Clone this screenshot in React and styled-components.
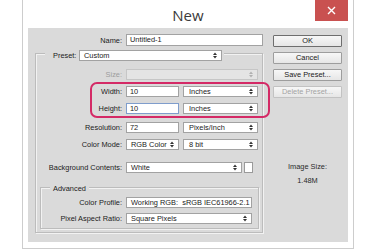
import React from "react";
import styled, { createGlobalStyle } from "styled-components";

const Global = createGlobalStyle`
  html, body { margin: 0; padding: 0; background: #fff; }
  body {
    font-family: "Liberation Sans", Arial, sans-serif;
    font-size: 7.4px;
    color: #1a1a1a;
  }
  #root { width: 375px; height: 249px; overflow: hidden; }
`;

const GRAY = "#dadada";

const Dialog = styled.div`
  box-sizing: border-box;
  margin-left: 22px;
  width: 332px;
  height: 249px;
  border: 1px solid #cdcdcd;
  border-top: none;
  background: #fff;
  display: flex;
  flex-direction: column;
  padding: 0 5px 6px;
`;

const TitleBar = styled.div`
  height: 28px;
  flex: none;
  display: grid;
  grid-template-columns: 1fr auto 1fr;
  align-items: start;
`;

const Title = styled.div`
  grid-column: 2;
  font-family: "Open Sans", "Noto Sans", sans-serif;
  font-size: 15px;
  line-height: 30px;
  color: #3a3a3a;
`;

const Close = styled.div`
  grid-column: 3;
  justify-self: end;
  width: 33px;
  height: 21px;
  background: #c95150;
  display: flex;
  align-items: center;
  justify-content: center;
`;

const Body = styled.div`
  flex: 1;
  background: ${GRAY};
  display: flex;
`;

const LeftCol = styled.div`
  width: 240px;
  display: flex;
  flex-direction: column;
  padding-top: 6px;
`;

const RightCol = styled.div`
  margin-left: 5px;
  width: 69px;
  padding-top: 7px;
  display: flex;
  flex-direction: column;
  gap: 5px;
`;

const Row = styled.div`
  display: flex;
  align-items: center;
  gap: 4px;
  height: ${(p) => p.$h || 11}px;
  margin-top: ${(p) => p.$mt || 0}px;
`;

const Label = styled.div`
  width: ${(p) => p.$w}px;
  flex: none;
  text-align: right;
  white-space: nowrap;
  color: ${(p) => (p.$disabled ? "#9c9c9c" : "#1a1a1a")};
`;

const Box = styled.div`
  box-sizing: border-box;
  flex: none;
  width: ${(p) => p.$w}px;
  height: ${(p) => p.$h || 11}px;
  border: 1px solid ${(p) => (p.$focus ? "#7f9dcc" : p.$disabled ? "#c6c6c6" : "#a2a2a2")};
  background: ${(p) => (p.$disabled ? "#e4e4e4" : "#fff")};
  display: flex;
  align-items: center;
  justify-content: space-between;
  padding: 0 4px 0 ${(p) => p.$pl || 4}px;
  white-space: nowrap;
  overflow: hidden;
  line-height: 1;
`;

const Swatch = styled.div`
  box-sizing: border-box;
  width: 9px;
  height: 11px;
  margin-left: -2px;
  border: 1px solid #9a9a9a;
  background: #fff;
`;

const Group = styled.div`
  box-sizing: border-box;
  flex: none;
  margin: ${(p) => p.$m};
  width: ${(p) => p.$w}px;
  height: ${(p) => p.$h}px;
  border: 1px solid #bcbcbc;
  box-shadow: inset 1px 1px 0 #f2f2f2, 1px 1px 0 #f2f2f2;
  display: flex;
  flex-direction: column;
`;

const Legend = styled.div`
  align-self: flex-start;
  display: flex;
  align-items: center;
  gap: 3px;
  height: ${(p) => p.$h}px;
  margin: ${(p) => p.$m};
  padding: ${(p) => p.$p};
  background: ${GRAY};
  white-space: nowrap;
`;

const Highlight = styled.div`
  position: relative;
  display: flex;
  flex-direction: column;
  gap: 6px;
  margin-top: 6px;
  &::after {
    content: "";
    position: absolute;
    top: -4px;
    bottom: -4px;
    left: 54px;
    right: -8px;
    border: 2px solid #d42a66;
    border-radius: 7px;
    pointer-events: none;
  }
`;

const Button = styled.div`
  box-sizing: border-box;
  height: 12px;
  border: 1px solid ${(p) => (p.$primary ? "#6e6e6e" : p.$disabled ? "#c2c2c2" : "#9d9d9d")};
  background: linear-gradient(#f7f7f7, #e6e6e6);
  color: ${(p) => (p.$disabled ? "#a3a3a3" : "#1a1a1a")};
  display: flex;
  align-items: center;
  justify-content: center;
  line-height: 1;
  border-radius: 1px;
`;

const Info = styled.div`
  text-align: center;
  line-height: 12px;
  margin-top: ${(p) => p.$mt || 0}px;
  color: #2a2a2a;
`;

const Arrows = ({ light }) => (
  <svg width="4" height="7" viewBox="0 0 4 7">
    <polygon points="0,3 2,0.5 4,3" fill={light ? "#b0b0b0" : "#333"} />
    <polygon points="0,4 2,6.5 4,4" fill={light ? "#b0b0b0" : "#333"} />
  </svg>
);

const Select = ({ w, value, disabled, pl }) => (
  <Box $w={w} $disabled={disabled} $pl={pl}>
    <span>{value}</span>
    <Arrows light={disabled} />
  </Box>
);

const Input = ({ w, value, focus, h }) => (
  <Box $w={w} $h={h} $focus={focus} $pl={3}>
    <span>{value}</span>
  </Box>
);

export default function App() {
  return (
    <>
      <Global />
      <Dialog>
        <TitleBar>
          <Title>New</Title>
          <Close>
            <svg width="9" height="9" viewBox="0 0 9 9">
              <path d="M1 1 L8 8 M8 1 L1 8" stroke="#fff" strokeWidth="1.4" />
            </svg>
          </Close>
        </TitleBar>
        <Body>
          <LeftCol>
            <Row $h={12}>
              <Label $w={94}>Name:</Label>
              <Input w={137} h={12} value="Untitled-1" />
            </Row>
            <Group $m="7px 0 0 7px" $w={228} $h={180}>
              <Legend $h={11} $m="-4px 0 0 9px" $p="0 2px 0 8px">
                <Label $w={23}>Preset:</Label>
                <Select w={143} value="Custom" />
              </Legend>
              <Row $mt={8}>
                <Label $w={86} $disabled>Size:</Label>
                <Select w={132} value="" disabled />
              </Row>
              <Highlight>
                <Row>
                  <Label $w={86}>Width:</Label>
                  <Input w={53} value="10" />
                  <Select w={75} value="Inches" pl={5} />
                </Row>
                <Row>
                  <Label $w={86}>Height:</Label>
                  <Input w={53} value="10" focus />
                  <Select w={75} value="Inches" pl={5} />
                </Row>
              </Highlight>
              <Row $mt={8}>
                <Label $w={86}>Resolution:</Label>
                <Input w={53} value="72" />
                <Select w={75} value="Pixels/Inch" pl={5} />
              </Row>
              <Row $mt={6}>
                <Label $w={86}>Color Mode:</Label>
                <Select w={53} value="RGB Color" />
                <Select w={75} value="8 bit" pl={5} />
              </Row>
              <Row $mt={12}>
                <Label $w={86}>Background Contents:</Label>
                <Select w={116} value="White" />
                <Swatch />
              </Row>
              <Group $m="14px 0 0 4px" $w={219} $h={42}>
                <Legend $h={10} $m="-5px 0 0 9px" $p="0 3px">
                  Advanced
                </Legend>
                <Row $mt={4}>
                  <Label $w={81}>Color Profile:</Label>
                  <Select w={126} value={"Working RGB:\u00a0 sRGB IEC61966-2.1"} />
                </Row>
                <Row $mt={5}>
                  <Label $w={81}>Pixel Aspect Ratio:</Label>
                  <Select w={126} value="Square Pixels" />
                </Row>
              </Group>
            </Group>
          </LeftCol>
          <RightCol>
            <Button $primary>OK</Button>
            <Button>Cancel</Button>
            <Button>Save Preset...</Button>
            <Button $disabled>Delete Preset...</Button>
            <Info $mt={58}>Image Size:</Info>
            <Info $mt={-3}>1.48M</Info>
          </RightCol>
        </Body>
      </Dialog>
    </>
  );
}
